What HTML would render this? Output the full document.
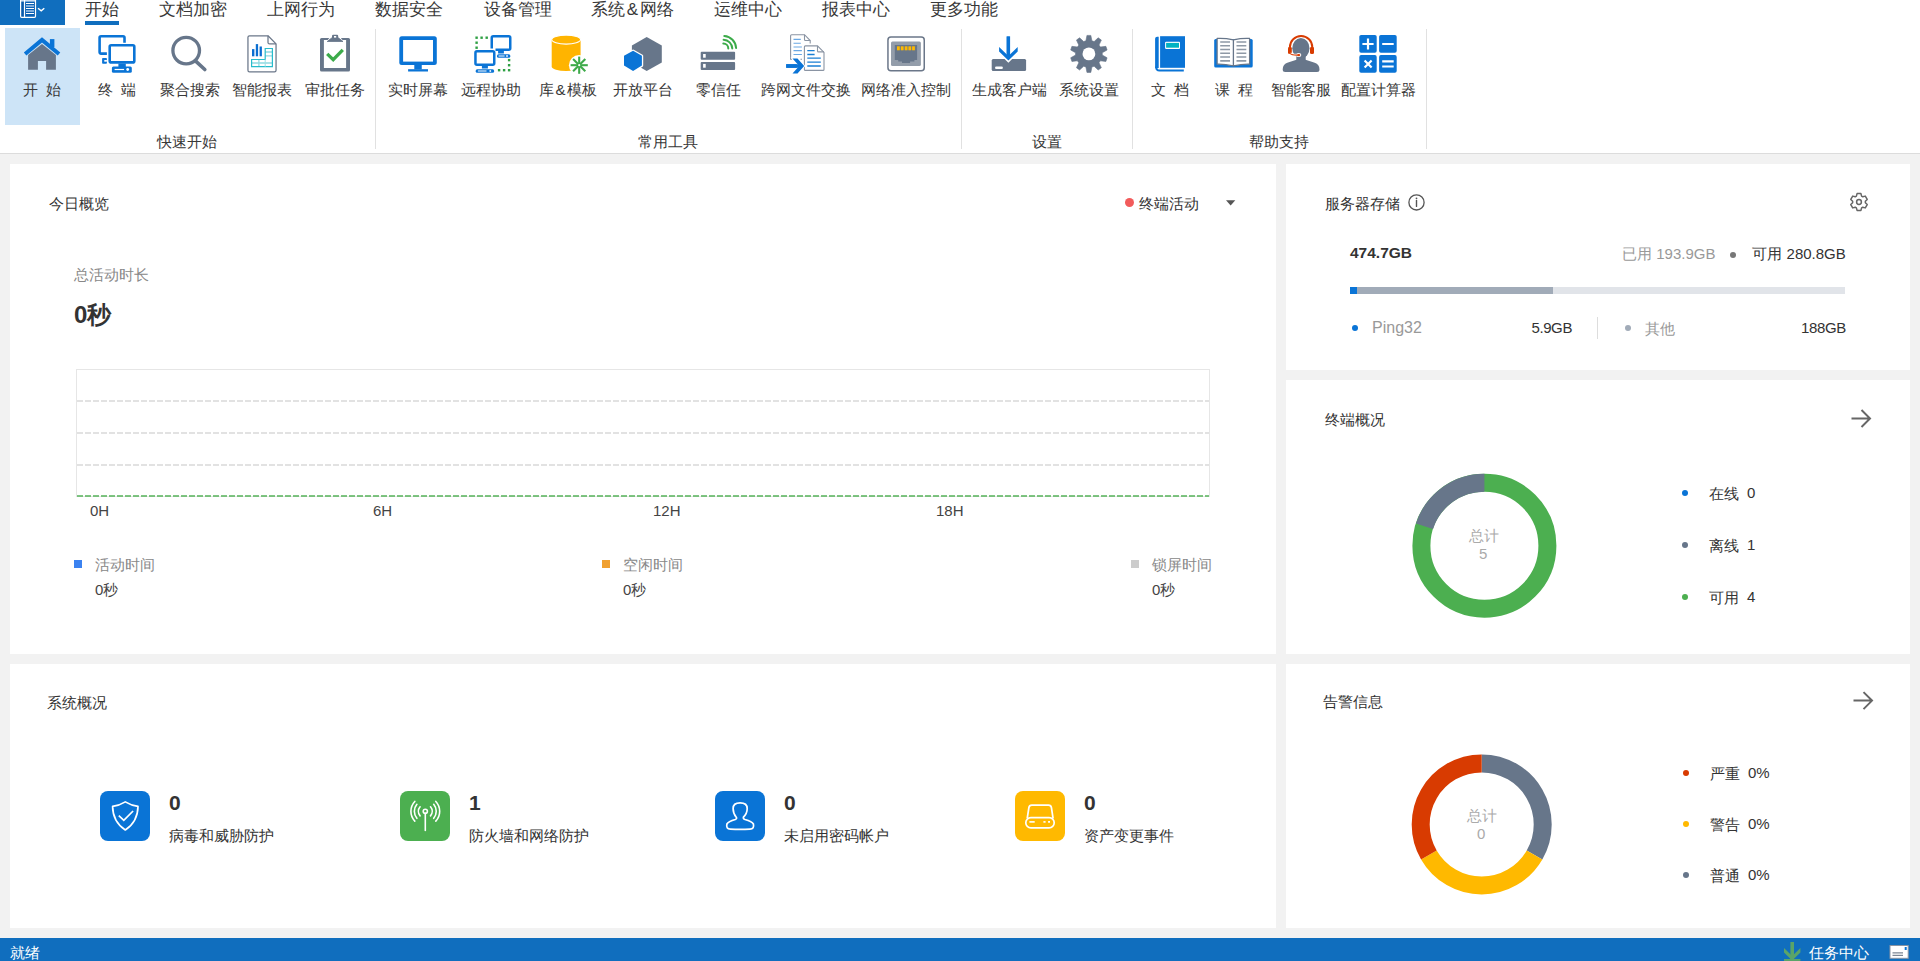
<!DOCTYPE html>
<html><head><meta charset="utf-8">
<style>
*{box-sizing:border-box}
html,body{margin:0;padding:0}
body{width:1920px;height:961px;overflow:hidden;background:#f2f2f2;position:relative;font-family:"Liberation Sans",sans-serif;color:#333}
.a{position:absolute;white-space:nowrap}
.t15{font-size:15px;line-height:15px}
.t17{font-size:17px;line-height:17px}
.lbl{position:absolute;font-size:15px;line-height:15px;color:#383838;white-space:nowrap;transform:translateX(-50%)}
.card{position:absolute;background:#fff}
.sep{position:absolute;width:1px;background:#e1e1e1;top:29px;height:120px}
</style></head>
<body>
<!-- ribbon -->
<div class="a" style="left:0;top:0;width:1920px;height:153px;background:#fff"></div>
<div class="a" style="left:0;top:153px;width:1920px;height:1px;background:#dcdcdc"></div>
<div class="a" style="left:0;top:0;width:65px;height:25px;background:#106ebe"></div>
<div class="a" style="left:85px;top:21px;width:34px;height:4px;background:#106ebe"></div>
<div class="a" style="left:5px;top:28px;width:75px;height:97px;background:#cde4f7"></div>

<div class="a t17" style="left:85px;top:1px;color:#383838">开始</div>
<div class="a t17" style="left:159px;top:1px;color:#383838">文档加密</div>
<div class="a t17" style="left:267px;top:1px;color:#383838">上网行为</div>
<div class="a t17" style="left:375px;top:1px;color:#383838">数据安全</div>
<div class="a t17" style="left:484px;top:1px;color:#383838">设备管理</div>
<div class="a t17" style="left:591px;top:1px;color:#383838">系统<span style="margin:0 1.8px">&amp;</span>网络</div>
<div class="a t17" style="left:714px;top:1px;color:#383838">运维中心</div>
<div class="a t17" style="left:822px;top:1px;color:#383838">报表中心</div>
<div class="a t17" style="left:930px;top:1px;color:#383838">更多功能</div>

<div class="sep" style="left:375px"></div>
<div class="sep" style="left:961px"></div>
<div class="sep" style="left:1132px"></div>
<div class="sep" style="left:1426px"></div>

<div class="lbl" style="left:42px;top:82px">开&nbsp;&nbsp;始</div>
<div class="lbl" style="left:117px;top:82px">终&nbsp;&nbsp;端</div>
<div class="lbl" style="left:190px;top:82px">聚合搜索</div>
<div class="lbl" style="left:262px;top:82px">智能报表</div>
<div class="lbl" style="left:335px;top:82px">审批任务</div>
<div class="lbl" style="left:418px;top:82px">实时屏幕</div>
<div class="lbl" style="left:490.5px;top:82px">远程协助</div>
<div class="lbl" style="left:568px;top:82px">库<span style="margin:0 1.5px">&amp;</span>模板</div>
<div class="lbl" style="left:643px;top:82px">开放平台</div>
<div class="lbl" style="left:718.5px;top:82px">零信任</div>
<div class="lbl" style="left:806px;top:82px">跨网文件交换</div>
<div class="lbl" style="left:906px;top:82px">网络准入控制</div>
<div class="lbl" style="left:1009px;top:82px">生成客户端</div>
<div class="lbl" style="left:1089px;top:82px">系统设置</div>
<div class="lbl" style="left:1170px;top:82px">文&nbsp;&nbsp;档</div>
<div class="lbl" style="left:1234px;top:82px">课&nbsp;&nbsp;程</div>
<div class="lbl" style="left:1301px;top:82px">智能客服</div>
<div class="lbl" style="left:1378.5px;top:82px">配置计算器</div>

<div class="lbl" style="left:187px;top:134px">快速开始</div>
<div class="lbl" style="left:668px;top:134px">常用工具</div>
<div class="lbl" style="left:1047px;top:134px">设置</div>
<div class="lbl" style="left:1279px;top:134px">帮助支持</div>

<svg class="a" style="left:0;top:0" width="1920" height="153" viewBox="0 0 1920 153">
<!-- file button icon -->
<rect x="21.2" y="0" width="2.7" height="16.7" fill="#0a5aab"/>
<rect x="25.1" y="0" width="9.8" height="16.7" fill="#0b60b3"/>
<rect x="20.6" y="0" width="15" height="1.6" fill="#c9ddf1"/>
<g fill="none" stroke="#fff" stroke-width="1.2">
<path d="M20.6 0V16.3Q20.6 17.3 21.6 17.3H34.5Q35.5 17.3 35.5 16.3V0"/>
<line x1="24.5" y1="0" x2="24.5" y2="17"/>
<path d="M26 3.5H34M26 8.5H34M26 13.5H34"/>
<path d="M26 6H34M26 11H34" stroke="#a8c8ea" stroke-width="1.4"/>
<polyline points="38,8.2 41.2,10.9 44.3,8.2" stroke-width="1.4"/>
</g>
<!-- home -->
<g transform="translate(20,30)">
<polygon fill="#67768a" points="8.1,24.9 22,13.9 35.9,24.9 35.9,39.7 26.1,39.7 26.1,31.1 17.9,31.1 17.9,39.7 8.1,39.7"/>
<rect x="29.9" y="9.1" width="4.5" height="8" fill="#0a74d6"/>
<polyline points="5.1,24 22,9.9 39,24" fill="none" stroke="#0a74d6" stroke-width="4" stroke-linecap="butt" stroke-linejoin="miter"/>
</g>
<!-- terminals -->
<g transform="translate(94,30)" fill="#0a74d6">
<path d="M12.9 23.6H7.1Q5.6 23.6 5.6 22.1V7.8Q5.6 6.3 7.1 6.3H29Q30.5 6.3 30.5 7.8V12.7" fill="none" stroke="#0a74d6" stroke-width="2.6"/>
<rect x="8.1" y="28" width="4.8" height="5.7" rx="0.8"/>
<rect x="10.3" y="30" width="2.6" height="1.7" fill="#fff"/>
<rect x="15.7" y="15.2" width="24.6" height="17.2" rx="1.5" fill="none" stroke="#0a74d6" stroke-width="2.6"/>
<rect x="24.4" y="33.5" width="7.4" height="3.5"/>
<rect x="17.9" y="36.6" width="19.9" height="6.2" rx="1.5"/>
<rect x="20.6" y="38.9" width="9.5" height="1.2" fill="#fff"/>
<circle cx="33.7" cy="39.5" r="1.4" fill="#fff"/>
</g>
<!-- search -->
<g transform="translate(166,30)" fill="none" stroke="#67768a">
<circle cx="20.2" cy="20.6" r="13.3" stroke-width="3.3"/>
<line x1="29.7" y1="31.1" x2="38.8" y2="39.5" stroke-width="3.6" stroke-linecap="round"/>
</g>
<!-- report -->
<g transform="translate(240,30)">
<path d="M28 5.75H9.5Q7.95 5.75 7.95 7.3V40.3Q7.95 41.85 9.5 41.85H34.5Q36.05 41.85 36.05 40.3V13.9Z" fill="#fff" stroke="#6b7789" stroke-width="1.25" stroke-linejoin="round"/>
<path d="M28 5.75V12.4Q28 13.9 29.5 13.9H36.05" fill="none" stroke="#6b7789" stroke-width="1.25"/>
<rect x="12" y="19.1" width="2.4" height="7.2" fill="#0a6ed1"/>
<rect x="15.8" y="14.1" width="2.3" height="12.2" fill="#0a6ed1"/>
<rect x="19.6" y="16.5" width="2.3" height="9.8" fill="#0a6ed1"/>
<path d="M25.2 22H32.4M25.2 25.8H32.4M11.6 33H32.4M18.9 29.5V36.7" fill="none" stroke="#8fd9e1" stroke-width="1.3"/>
<path d="M11.6 29.5H25.2V18.5H32.4V36.7H11.6Z" fill="none" stroke="#28bccc" stroke-width="1.2"/>
<path d="M25.2 29.5V36.7" fill="none" stroke="#9ee0e6" stroke-width="1"/>
</g>
<!-- clipboard -->
<g transform="translate(310,30)">
<rect x="10" y="7.9" width="30" height="33.5" rx="1.5" fill="#67768a"/>
<rect x="13.9" y="10" width="22.2" height="28" fill="#fff"/>
<polygon points="15.6,12.6 20.6,6.6 29.6,6.6 34.6,12.6" fill="#fff"/>
<polygon points="17.2,11.5 21.6,8 28.6,8 33,11.5" fill="#67768a" stroke="#67768a" stroke-width="0.8" stroke-linejoin="round"/>
<rect x="22" y="4.8" width="6.2" height="4" rx="1.2" fill="#67768a"/>
<rect x="24" y="6" width="2.2" height="1.6" fill="#fff"/>
<polyline points="17.2,23.9 23.2,29.7 32.8,19.9" fill="none" stroke="#3cab4a" stroke-width="3.3"/>
</g>
<!-- realtime monitor -->
<g transform="translate(394,30)" fill="#0a74d6">
<rect x="5.3" y="6.2" width="37.5" height="28.7" rx="2.5"/>
<rect x="9.1" y="10" width="29.9" height="21.6" fill="#fff"/>
<rect x="20.3" y="34.5" width="7.45" height="4.9"/>
<rect x="14.1" y="39.2" width="19.9" height="2.3"/>
</g>
<!-- remote assist -->
<g transform="translate(468,30)">
<g fill="#2ea043">
<rect x="7.4" y="6.5" width="2.4" height="2.4"/><rect x="12.4" y="6.5" width="2.4" height="2.4"/><rect x="17.5" y="6.5" width="2.4" height="2.4"/>
<rect x="7.4" y="11.5" width="2.4" height="2.4"/><rect x="7.4" y="16.5" width="2.4" height="2.4"/>
<rect x="39.9" y="28.9" width="2.4" height="2.4"/><rect x="39.9" y="34" width="2.4" height="2.4"/><rect x="39.9" y="39" width="2.4" height="2.4"/>
<rect x="29.9" y="39" width="2.4" height="2.4"/><rect x="34.9" y="39" width="2.4" height="2.4"/>
</g>
<path d="M23.75 18.4V7.75Q23.75 6.25 25.25 6.25H40.75Q42.25 6.25 42.25 7.75V18.25Q42.25 19.75 40.75 19.75H27.5" fill="none" stroke="#0a74d6" stroke-width="2.5"/>
<rect x="30.1" y="20.5" width="5.8" height="3" fill="#0a74d6"/>
<rect x="29" y="24.2" width="13.3" height="3.6" rx="1.5" fill="#0a74d6"/>
<rect x="30.6" y="25.5" width="6" height="1" fill="#fff"/><rect x="38.2" y="25.2" width="1.6" height="1.6" fill="#fff"/>
<rect x="7.45" y="21.35" width="18.8" height="13.3" rx="1.5" fill="none" stroke="#0a74d6" stroke-width="2.5"/>
<rect x="13.9" y="35.5" width="6" height="3" fill="#0a74d6"/>
<rect x="7.7" y="39.2" width="18.4" height="3.6" rx="1.5" fill="#0a74d6"/>
<rect x="9.9" y="40.5" width="8.6" height="1" fill="#fff"/><rect x="21.5" y="40.2" width="1.6" height="1.6" fill="#fff"/>
</g>
<!-- db template -->
<g transform="translate(544,30)">
<path d="M7.7 9.6V36.5A14.45 4.6 0 0 0 36.6 36.5V9.6Z" fill="#ffb400"/>
<ellipse cx="22.15" cy="9.6" rx="14.45" ry="4.5" fill="#ffb400" stroke="#fff" stroke-width="1.1"/>
<circle cx="35.2" cy="35.2" r="10.3" fill="#fff"/>
<g stroke="#3daa49" stroke-width="2.1">
<line x1="35.2" y1="26.6" x2="35.2" y2="43.8"/><line x1="26.6" y1="35.2" x2="43.8" y2="35.2"/>
<line x1="29.1" y1="29.1" x2="41.3" y2="41.3"/><line x1="41.3" y1="29.1" x2="29.1" y2="41.3"/>
</g>
<circle cx="35.2" cy="35.2" r="1.1" fill="#fff"/>
</g>
<!-- open platform -->
<g transform="translate(618,30)">
<polygon points="28.7,6.9 43.8,15.6 43.8,32.5 28.7,40.9 13.9,32.5 13.9,15.6" fill="#67768a"/>
<polygon points="15.1,20.8 23.9,25.8 23.9,35.6 15.1,40.9 6,35.6 6,25.8" fill="#0a74d6" stroke="#fff" stroke-width="2.6" style="paint-order:stroke" stroke-linejoin="round"/>
</g>
<!-- zero trust -->
<g transform="translate(694,28)">
<rect x="6.7" y="23.7" width="34.4" height="8.1" rx="1" fill="#67768a"/>
<rect x="6.7" y="34" width="34.4" height="7.9" rx="1" fill="#67768a"/>
<rect x="9.1" y="26" width="2.6" height="3.7" fill="#fff"/>
<rect x="9.1" y="35.9" width="2.6" height="3.8" fill="#fff"/>
<g fill="none" stroke="#3cab4a" stroke-width="2" stroke-linecap="round">
<path d="M29.3 15.6A5 5 0 0 1 34.3 20.6"/>
<path d="M29.6 11.8A9 9 0 0 1 38.3 20.4"/>
<path d="M30.3 8A12.6 12.6 0 0 1 42.1 20"/>
</g>
</g>
<!-- cross-network file exchange -->
<g transform="translate(780,28)">
<path d="M30.2 15.6V12.5L24.5 6.7H11.6Q10.6 6.7 10.6 7.7V31.2H12" fill="none" stroke="#8a94a3" stroke-width="1.1"/>
<path d="M24.5 6.7V11.5Q24.5 12.5 25.5 12.5H30.2" fill="none" stroke="#8a94a3" stroke-width="1.1"/>
<path d="M20.5 31.2H22" fill="none" stroke="#8a94a3" stroke-width="1.1"/>
<path d="M13.5 11.4H20.8M13.5 15.3H20.8M13.5 19H21.9M13.5 22.6H21.9M13.5 26.5H21.9" fill="none" stroke="#6aa8e4" stroke-width="1.1"/>
<path d="M24.4 18.9Q24.4 17.9 25.4 17.9H37.5L44 24.4V41.4Q44 42.4 43 42.4H25.4Q24.4 42.4 24.4 41.4Z" fill="#fff" stroke="#8a94a3" stroke-width="1.1"/>
<path d="M37.5 17.9V22.9Q37.5 23.9 38.5 23.9H44" fill="none" stroke="#8a94a3" stroke-width="1.1"/>
<path d="M27.3 22.7H34.6M27.3 26.5H34.6M27.3 30.2H40.8M27.3 34.1H40.8M27.3 38H40.8" fill="none" stroke="#1a7fd4" stroke-width="1.3"/>
<rect x="6.2" y="36.2" width="12" height="3.6" fill="#0a74d6"/>
<polygon points="12.5,30.4 17.5,30.4 24.2,38 17.5,45.5 12.5,45.5 19.2,38" fill="#0a74d6" stroke="#fff" stroke-width="1.8" style="paint-order:stroke"/>
<rect x="6.2" y="36.2" width="15" height="3.6" fill="#0a74d6"/>
</g>
<!-- NAC -->
<g transform="translate(880,30)">
<rect x="7.95" y="6.95" width="36.3" height="33.7" rx="3" fill="#fff" stroke="#6b7789" stroke-width="1.5"/>
<rect x="11" y="11.5" width="29.9" height="24.6" rx="1.5" fill="#939daa"/>
<polygon points="14.8,15.1 37.1,15.1 37.1,29.9 34.4,29.9 34.4,31.5 30.1,31.5 30.1,33 22,33 22,31.5 18.2,31.5 18.2,29.9 14.8,29.9" fill="#67768a"/>
<g fill="#ffb900"><rect x="17" y="16.3" width="2.8" height="4"/><rect x="20.8" y="16.3" width="2.8" height="4"/><rect x="24.7" y="16.3" width="2.8" height="4"/><rect x="28.4" y="16.3" width="2.8" height="4"/><rect x="32.1" y="16.3" width="2.8" height="4"/></g>
</g>
<!-- download client -->
<g transform="translate(984,30)">
<rect x="7.7" y="29" width="34.4" height="12.1" rx="1.5" fill="#67768a"/>
<rect x="11" y="36.4" width="7.9" height="2.6" rx="1.3" fill="#fff"/>
<polygon points="15.1,17 24.4,26 33.7,17 33.7,21.5 24.4,30.6 15.1,21.5" fill="#0a74d6" stroke="#fff" stroke-width="3" style="paint-order:stroke" stroke-linejoin="miter"/>
<rect x="22.5" y="6.2" width="3.6" height="22" rx="0.5" fill="#0a74d6"/>
</g>
<!-- gear -->
<g transform="translate(1064,30)">
<polygon fill="#67768a" stroke="#67768a" stroke-width="0.6" stroke-linejoin="round" points="21.89,10.84 22.96,5.40 26.84,5.40 27.91,10.84 30.14,11.57 34.20,7.79 37.35,10.08 35.01,15.11 36.39,17.00 41.89,16.33 43.09,20.03 38.25,22.73 38.25,25.07 43.09,27.77 41.89,31.47 36.39,30.80 35.01,32.69 37.35,37.72 34.20,40.01 30.14,36.23 27.91,36.96 26.84,42.40 22.96,42.40 21.89,36.96 19.66,36.23 15.60,40.01 12.45,37.72 14.79,32.69 13.41,30.80 7.91,31.47 6.71,27.77 11.55,25.07 11.55,22.73 6.71,20.03 7.91,16.33 13.41,17.00 14.79,15.11 12.45,10.08 15.60,7.79 19.66,11.57"/>
<circle cx="24.9" cy="23.9" r="6.4" fill="#fff"/>
</g>
<!-- doc book -->
<g transform="translate(1146,30)">
<rect x="14.1" y="6.2" width="24.9" height="31.6" fill="#0a74d6"/>
<path d="M9.1 38V8.7Q9.1 6.7 11.1 6.7H12.7V38Z" fill="#0a74d6"/>
<path d="M10.1 36.5Q10.1 40.6 13.5 40.6H37.8" fill="none" stroke="#0a74d6" stroke-width="2"/>
<rect x="19.1" y="11.7" width="14.9" height="7.2" rx="1" fill="#fff"/>
<rect x="20.1" y="12.9" width="12.9" height="4.8" fill="#00b2c2"/>
</g>
<!-- course open book -->
<g transform="translate(1208,30)">
<rect x="6.2" y="9.1" width="38.5" height="28.5" rx="1.5" fill="#0a74d6"/>
<path d="M25.4 9.8Q17 8 9.1 8.4V34.2Q17 34 25.4 35.9Z M25.4 9.8Q33.8 8 41.6 8.4V34.2Q33.8 34 25.4 35.9Z" fill="#fff" stroke="#67768a" stroke-width="1.3" stroke-linejoin="round"/>
<path d="M12.2 12H22M12.2 15.8H22M12.2 19.5H22M12.2 23.3H22M12.2 27H22M12.2 30.9H22M28.5 12H38.3M28.5 15.8H38.3M28.5 19.5H38.3M28.5 23.3H38.3M28.5 27H38.3M28.5 30.9H38.3" fill="none" stroke="#8f99a6" stroke-width="1.6"/>
</g>
<!-- smart support headset -->
<g transform="translate(1276,30)">
<path d="M6.7 39.6Q6.7 34.2 12 32.6L20.5 29.8H29.5L38 32.6Q43.5 34.2 43.5 39.6Q43.5 42.1 41 42.1H9.2Q6.7 42.1 6.7 39.6Z" fill="#67768a"/>
<rect x="20.3" y="24" width="9.4" height="7" fill="#67768a"/>
<ellipse cx="24.9" cy="18.3" rx="8.6" ry="10.2" fill="#67768a"/>
<path d="M13.9 20V17.2A11.2 11.2 0 0 1 36.3 17.2V20" fill="none" stroke="#fff" stroke-width="3.6"/>
<path d="M13.9 20V17.2A11.2 11.2 0 0 1 36.3 17.2V20" fill="none" stroke="#d83b01" stroke-width="1.9"/>
<rect x="12" y="16.7" width="3.8" height="7.2" rx="1.5" fill="#d83b01"/>
<rect x="34" y="16.7" width="4" height="7.2" rx="1.5" fill="#d83b01"/>
<path d="M14 23.4Q16 25.4 22.5 25.1" fill="none" stroke="#fff" stroke-width="2.8"/>
<ellipse cx="22.8" cy="25.1" rx="2.5" ry="2" fill="#fff"/>
<path d="M14 23.4Q16 25.4 22.5 25.1" fill="none" stroke="#d83b01" stroke-width="1.2"/>
<ellipse cx="22.8" cy="25.1" rx="1.5" ry="1.1" fill="#d83b01"/>
</g>
<!-- calculator -->
<g transform="translate(1354,30)">
<g fill="#0a74d6">
<rect x="5.3" y="5" width="17.4" height="17.7" rx="1.8"/><rect x="25.1" y="5" width="17.6" height="17.7" rx="1.8"/>
<rect x="5.3" y="25.1" width="17.4" height="17.6" rx="1.8"/><rect x="25.1" y="25.1" width="17.6" height="17.6" rx="1.8"/>
</g>
<g stroke="#fff" stroke-width="2.2" fill="none">
<path d="M8.4 14H19.6M14 8.4V19.6M28.2 14H39.7M10.6 30.4L17.6 37.5M17.6 30.4L10.6 37.5M28.2 31.3H39.7M28.2 36.5H39.7"/>
</g>
</g>
</svg>


<!-- cards -->
<div class="card" style="left:10px;top:164px;width:1266px;height:490px"></div>
<div class="card" style="left:1286px;top:164px;width:624px;height:206px"></div>
<div class="card" style="left:1286px;top:380px;width:624px;height:274px"></div>
<div class="card" style="left:10px;top:664px;width:1266px;height:264px"></div>
<div class="card" style="left:1286px;top:664px;width:624px;height:264px"></div>

<!-- today overview -->
<div class="a t15" style="left:49px;top:196px;color:#333">今日概览</div>
<div class="a" style="left:1125px;top:198px;width:9px;height:9px;border-radius:50%;background:#f25b5b"></div>
<div class="a t15" style="left:1139px;top:196px;color:#333">终端活动</div>
<svg class="a" style="left:1220px;top:195px" width="20" height="16"><polygon points="6,5.3 15.3,5.3 10.65,10.6" fill="#555"/></svg>
<div class="a t15" style="left:74px;top:267px;color:#888">总活动时长</div>
<div class="a" style="left:74px;top:303px;font-size:24px;line-height:24px;font-weight:bold;color:#333">0秒</div>

<svg class="a" style="left:0;top:360px" width="1276" height="150">
<rect x="76.5" y="9.5" width="1133" height="127" fill="none" stroke="#e6e6e6" stroke-width="1"/>
<g stroke="#e2e2e2" stroke-width="2" stroke-dasharray="6 2">
<line x1="77" y1="41" x2="1209" y2="41"/>
<line x1="77" y1="73" x2="1209" y2="73"/>
<line x1="77" y1="105" x2="1209" y2="105"/>
</g>
<line x1="77" y1="136" x2="1209" y2="136" stroke="#55b259" stroke-width="1.4" stroke-dasharray="6 2"/>
</svg>
<div class="a t15" style="left:90px;top:503px;color:#444">0H</div>
<div class="a t15" style="left:373px;top:503px;color:#444">6H</div>
<div class="a t15" style="left:653px;top:503px;color:#444">12H</div>
<div class="a t15" style="left:936px;top:503px;color:#444">18H</div>

<div class="a" style="left:74px;top:560px;width:8px;height:8px;background:#3b82f0"></div>
<div class="a t15" style="left:95px;top:557px;color:#888">活动时间</div>
<div class="a t15" style="left:95px;top:582px;color:#444">0秒</div>
<div class="a" style="left:602px;top:560px;width:8px;height:8px;background:#f0a030"></div>
<div class="a t15" style="left:623px;top:557px;color:#888">空闲时间</div>
<div class="a t15" style="left:623px;top:582px;color:#444">0秒</div>
<div class="a" style="left:1131px;top:560px;width:8px;height:8px;background:#ccc"></div>
<div class="a t15" style="left:1152px;top:557px;color:#888">锁屏时间</div>
<div class="a t15" style="left:1152px;top:582px;color:#444">0秒</div>

<!-- storage -->
<div class="a t15" style="left:1325px;top:196px;color:#333">服务器存储</div>
<svg class="a" style="left:1400px;top:186px" width="30" height="30">
<circle cx="16.5" cy="16.4" r="7.6" fill="none" stroke="#555" stroke-width="1.3"/>
<line x1="16.5" y1="14.4" x2="16.5" y2="20.4" stroke="#555" stroke-width="1.4" stroke-linecap="round"/>
<circle cx="16.5" cy="12.3" r="0.9" fill="#555"/>
</svg>
<svg class="a" style="left:1844px;top:187px" width="30" height="30">
<g transform="translate(15,15)">
<polygon fill="none" stroke="#666" stroke-width="1.5" stroke-linejoin="round" points="-2.60,-5.85 -1.93,-8.38 1.93,-8.38 2.60,-5.85 3.76,-5.18 6.29,-5.87 8.22,-2.51 6.36,-0.67 6.36,0.67 8.22,2.51 6.29,5.87 3.76,5.18 2.60,5.85 1.93,8.38 -1.93,8.38 -2.60,5.85 -3.76,5.18 -6.29,5.87 -8.22,2.51 -6.36,0.67 -6.36,-0.67 -8.22,-2.51 -6.29,-5.87 -3.76,-5.18"/>
<circle cx="0" cy="0" r="2.4" fill="none" stroke="#666" stroke-width="1.5"/>
</g>
</svg>
<div class="a" style="left:1350px;top:245px;font-size:15.5px;line-height:16px;font-weight:bold;color:#333">474.7GB</div>
<div class="a t15" style="left:1615px;top:246px;width:100.5px;text-align:right;color:#999">已用 193.9GB</div>
<div class="a" style="left:1730px;top:251.5px;width:6px;height:6px;border-radius:50%;background:#777"></div>
<div class="a t15" style="left:1745px;top:246px;width:100.8px;text-align:right;color:#333">可用 280.8GB</div>
<div class="a" style="left:1350px;top:287px;width:495px;height:7px;background:#e1e4e9"></div>
<div class="a" style="left:1350px;top:287px;width:203px;height:7px;background:#a1abb8"></div>
<div class="a" style="left:1350px;top:287px;width:7px;height:7px;background:#0a74d6"></div>
<div class="a" style="left:1352px;top:325.3px;width:6px;height:6px;border-radius:50%;background:#0a74d6"></div>
<div class="a t15" style="left:1372px;top:320px;color:#999;font-size:16px;line-height:16px">Ping32</div>
<div class="a t15" style="left:1471px;top:320px;width:101px;text-align:right;color:#333;letter-spacing:-0.4px">5.9GB</div>
<div class="a" style="left:1597px;top:317px;width:1px;height:22px;background:#ddd"></div>
<div class="a" style="left:1625px;top:325px;width:6px;height:6px;border-radius:50%;background:#a1abb8"></div>
<div class="a t15" style="left:1645px;top:321px;color:#999">其他</div>
<div class="a t15" style="left:1745px;top:320px;width:100.8px;text-align:right;color:#333;letter-spacing:-0.4px">188GB</div>

<!-- terminal overview -->
<div class="a t15" style="left:1325px;top:412px;color:#333">终端概况</div>
<svg class="a" style="left:1846px;top:404px" width="30" height="30">
<path d="M5.5 14.5H23M15.5 6L24 14.5L15.5 23" fill="none" stroke="#666" stroke-width="2"/>
</svg>
<svg class="a" style="left:1400px;top:460px" width="170" height="170">
<g transform="translate(84.4,85.7)">
<circle r="63" fill="none" stroke="#4caf50" stroke-width="18"/>
<path d="M0 -63A63 63 0 0 0 -59.92 -19.47" fill="none" stroke="#67768a" stroke-width="18"/>
</g>
</svg>
<div class="a t15" style="left:1469px;top:528px;color:#aaa">总计</div>
<div class="a t15" style="left:1479px;top:546px;color:#aaa">5</div>
<div class="a" style="left:1681.7px;top:490.4px;width:6px;height:6px;border-radius:50%;background:#0a74d6"></div>
<div class="a t15" style="left:1709px;top:486px;color:#333">在线</div>
<div class="a t15" style="left:1747px;top:485px;color:#333">0</div>
<div class="a" style="left:1681.7px;top:542.4px;width:6px;height:6px;border-radius:50%;background:#67768a"></div>
<div class="a t15" style="left:1709px;top:538px;color:#333">离线</div>
<div class="a t15" style="left:1747px;top:537px;color:#333">1</div>
<div class="a" style="left:1681.7px;top:594.4px;width:6px;height:6px;border-radius:50%;background:#4caf50"></div>
<div class="a t15" style="left:1709px;top:590px;color:#333">可用</div>
<div class="a t15" style="left:1747px;top:589px;color:#333">4</div>

<!-- system overview -->
<div class="a t15" style="left:47px;top:695px;color:#333">系统概况</div>
<svg class="a" style="left:100px;top:791px" width="50" height="50">
<rect width="50" height="50" rx="8" fill="#0a74d6"/>
<path d="M25.3 10.9Q19.5 14.5 12.6 15.4Q12.8 30.5 25.3 39Q37.8 30.5 38 15.4Q31.1 14.5 25.3 10.9Z" fill="none" stroke="#fff" stroke-width="1.7" stroke-linejoin="round"/>
<polyline points="18.8,24.7 23.8,29.4 33.1,20" fill="none" stroke="#fff" stroke-width="1.7"/>
</svg>
<div class="a" style="left:169px;top:792px;font-size:21px;line-height:21px;font-weight:bold;color:#333">0</div>
<div class="a t15" style="left:169px;top:828px;color:#333">病毒和威胁防护</div>

<svg class="a" style="left:400px;top:791px" width="50" height="50">
<rect width="50" height="50" rx="8" fill="#4caf50"/>
<g fill="none" stroke="#fff" stroke-width="1.6" stroke-linecap="round">
<circle cx="25.3" cy="20.3" r="2.1"/>
<line x1="25.3" y1="22.4" x2="25.3" y2="39.5"/>
<path d="M20.1 15.75A6.9 6.9 0 0 0 20.1 24.85"/>
<path d="M16.9 13.3A10.9 10.9 0 0 0 16.9 27.3"/>
<path d="M14.8 10.45A14.4 14.4 0 0 0 14.8 30.15"/>
<path d="M30.5 15.75A6.9 6.9 0 0 1 30.5 24.85"/>
<path d="M33.7 13.3A10.9 10.9 0 0 1 33.7 27.3"/>
<path d="M35.8 10.45A14.4 14.4 0 0 1 35.8 30.15"/>
</g>
</svg>
<div class="a" style="left:469px;top:792px;font-size:21px;line-height:21px;font-weight:bold;color:#333">1</div>
<div class="a t15" style="left:469px;top:828px;color:#333">防火墙和网络防护</div>

<svg class="a" style="left:715px;top:791px" width="50" height="50">
<rect width="50" height="50" rx="8" fill="#0a74d6"/>
<path d="M21.25 26.2Q18.1 22.5 18.1 17.5Q18.1 11.9 25.15 11.9Q32.2 11.9 32.2 17.5Q32.2 22.5 28.4 26.2Q28 27.7 30 28.5Q37 30.5 38.4 33Q39.5 37.8 35 38.1Q25 38.8 15.3 38.1Q10.8 37.8 11.9 33Q13.3 30.5 20.3 28.5Q22.3 27.7 21.25 26.2Z" fill="none" stroke="#fff" stroke-width="1.7" stroke-linejoin="round"/>
</svg>
<div class="a" style="left:784px;top:792px;font-size:21px;line-height:21px;font-weight:bold;color:#333">0</div>
<div class="a t15" style="left:784px;top:828px;color:#333">未启用密码帐户</div>

<svg class="a" style="left:1015px;top:791px" width="50" height="50">
<rect width="50" height="50" rx="8" fill="#ffb900"/>
<g fill="none" stroke="#fff" stroke-width="1.7" stroke-linejoin="round">
<path d="M12.2 27.5L13.9 16.5Q14.3 14.1 16.8 14.1H33.5Q36 14.1 36.4 16.5L38.1 27.5"/>
<rect x="10.8" y="26.7" width="28.4" height="10.2" rx="5.1"/>
</g>
<g stroke="#fff" stroke-width="1.6">
<line x1="14.4" y1="30.9" x2="19.7" y2="30.9"/><line x1="28.4" y1="30.9" x2="30.6" y2="30.9"/><line x1="33.1" y1="30.9" x2="35" y2="30.9"/>
</g>
</svg>
<div class="a" style="left:1084px;top:792px;font-size:21px;line-height:21px;font-weight:bold;color:#333">0</div>
<div class="a t15" style="left:1084px;top:828px;color:#333">资产变更事件</div>

<!-- alerts -->
<div class="a t15" style="left:1323px;top:694px;color:#333">告警信息</div>
<svg class="a" style="left:1848px;top:686px" width="30" height="30">
<path d="M5.5 14.6H23M15.5 6.1L24 14.6L15.5 23.1" fill="none" stroke="#666" stroke-width="2"/>
</svg>
<svg class="a" style="left:1400px;top:740px" width="170" height="170">
<g transform="translate(81.7,84.4)">
<path d="M0 -61A61 61 0 0 1 52.83 30.5" fill="none" stroke="#67768a" stroke-width="18"/>
<path d="M52.83 30.5A61 61 0 0 1 -52.83 30.5" fill="none" stroke="#ffb900" stroke-width="18"/>
<path d="M-52.83 30.5A61 61 0 0 1 0 -61" fill="none" stroke="#d83b01" stroke-width="18"/>
</g>
</svg>
<div class="a t15" style="left:1467px;top:808px;color:#aaa">总计</div>
<div class="a t15" style="left:1477px;top:826px;color:#aaa">0</div>
<div class="a" style="left:1682.6px;top:770.4px;width:6px;height:6px;border-radius:50%;background:#d83b01"></div>
<div class="a t15" style="left:1710px;top:766px;color:#333">严重</div>
<div class="a t15" style="left:1748px;top:765px;color:#333">0%</div>
<div class="a" style="left:1682.6px;top:821.3px;width:6px;height:6px;border-radius:50%;background:#ffb900"></div>
<div class="a t15" style="left:1710px;top:817px;color:#333">警告</div>
<div class="a t15" style="left:1748px;top:816px;color:#333">0%</div>
<div class="a" style="left:1682.6px;top:872.3px;width:6px;height:6px;border-radius:50%;background:#67768a"></div>
<div class="a t15" style="left:1710px;top:868px;color:#333">普通</div>
<div class="a t15" style="left:1748px;top:867px;color:#333">0%</div>

<!-- status bar -->
<div class="a" style="left:0;top:938px;width:1920px;height:23px;background:#106ebe"></div>
<div class="a t15" style="left:10px;top:945px;color:#fff">就绪</div>
<div class="a t15" style="left:1809px;top:945px;color:#fff">任务中心</div>
<!-- status icons -->
<svg class="a" style="left:1780px;top:938px" width="30" height="23">
<g fill="#5aa469">
<rect x="10.4" y="4" width="3.6" height="17"/>
<polygon points="4,10 12.2,18 20.4,10 20.4,14.5 12.2,22.5 4,14.5"/>
<rect x="4" y="21" width="16.4" height="3"/>
</g>
</svg>
<svg class="a" style="left:1886px;top:942px" width="26" height="19">
<rect x="4" y="3.5" width="18.2" height="12.8" fill="#fff" stroke="#8a94a3" stroke-width="1"/>
<rect x="18.7" y="5" width="2" height="3" fill="#0a74d6"/>
<path d="M6.5 10.8H17M6.5 13.3H17" stroke="#7c8694" stroke-width="1.2"/>
</svg>


</body></html>
